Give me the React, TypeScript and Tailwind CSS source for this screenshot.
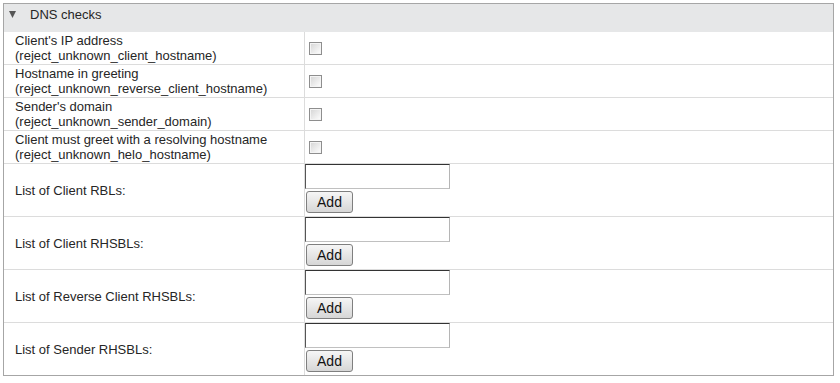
import React from 'react';

const checkRows = [
  { label: "Client's IP address", key: 'reject_unknown_client_hostname' },
  { label: 'Hostname in greeting', key: 'reject_unknown_reverse_client_hostname' },
  { label: "Sender's domain", key: 'reject_unknown_sender_domain' },
  { label: 'Client must greet with a resolving hostname', key: 'reject_unknown_helo_hostname' },
];

const listRows = [
  'List of Client RBLs:',
  'List of Client RHSBLs:',
  'List of Reverse Client RHSBLs:',
  'List of Sender RHSBLs:',
];

const Checkbox = () => (
  <input
    type="checkbox"
    className="appearance-none w-[13px] h-[13px] m-0 border border-[#8e8e8e] bg-gradient-to-br from-[#d4d4d4] to-white shadow-[inset_0_0_0_1px_#f4f4f4]"
  />
);

export default function App() {
  return (
    <div className="bg-white min-h-screen pt-[3px] pl-[3px] font-['Liberation_Sans',Arial,sans-serif] text-[13px] leading-[15px] text-[#262626]">
      <div className="w-[831px] border border-[#a6a6a6]">
        {/* Header */}
        <div className="h-[28px] bg-[#e6e7e8] flex items-start pt-[3px] pl-[5px] gap-[14px]">
          <svg width="7" height="7" viewBox="0 0 7 7" className="mt-[4px]">
            <polygon points="0,0 7,0 3.5,7" fill="#555" />
          </svg>
          <span>DNS checks</span>
        </div>

        {/* Checkbox rows */}
        {checkRows.map((row) => (
          <div key={row.key} className="flex h-[33px] border-b border-[#dcdcdc]">
            <div className="w-[301px] border-r border-[#dcdcdc] pl-[11px] flex flex-col justify-center">
              <span>{row.label}</span>
              <span>({row.key})</span>
            </div>
            <div className="flex-1 flex items-center pl-[4px]">
              <Checkbox />
            </div>
          </div>
        ))}

        {/* List rows */}
        {listRows.map((label, i) => (
          <div
            key={label}
            className={`flex ${i < listRows.length - 1 ? 'h-[53px] border-b border-[#dcdcdc]' : 'h-[52px]'}`}
          >
            <div className="w-[301px] border-r border-[#dcdcdc] pl-[11px] flex items-center">
              <span>{label}</span>
            </div>
            <div className="flex-1 flex flex-col items-start gap-[2px]">
              <input
                type="text"
                className="w-[145px] h-[25px] border border-t-[#333] border-l-[#555] border-r-[#b5b5b5] border-b-[#c0c0c0] outline-none px-1"
              />
              <button className="ml-[1px] w-[47px] h-[22px] rounded-[3px] border border-[#7f7f7f] bg-gradient-to-b from-[#f6f6f6] to-[#d6d6d6] text-[14px] text-[#111] leading-none">
                Add
              </button>
            </div>
          </div>
        ))}
      </div>
    </div>
  );
}
